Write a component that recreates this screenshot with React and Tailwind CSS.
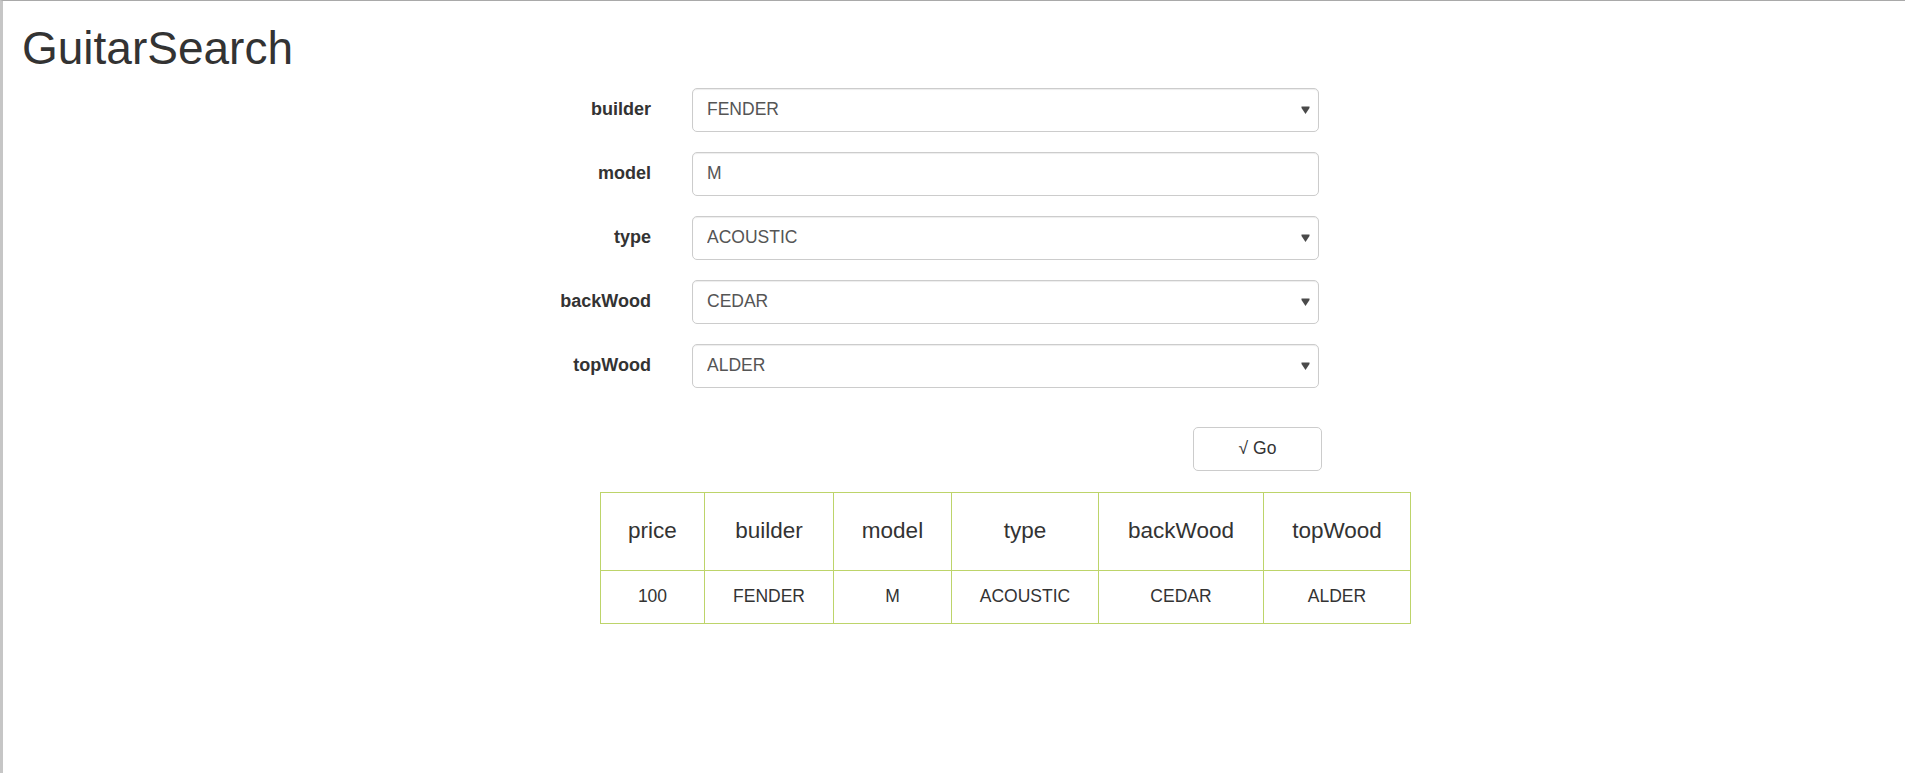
import React, { useState } from 'react';

const font = { fontFamily: '"Liberation Sans", Arial, sans-serif' };

const Arrow = () => (
  <svg width="9" height="9" viewBox="0 0 9 9" className="pointer-events-none absolute right-[9px] top-1/2 -translate-y-1/2">
    <path d="M0.5 1H8.5V2.5L4.5 8.5L0.5 2.5Z" fill="#4a4a4a" />
  </svg>
);

const SelectField = ({ value, options, onChange }) => (
  <div className="relative w-[627px]">
    <select
      value={value}
      onChange={(e) => onChange(e.target.value)}
      className="block h-[44px] w-full appearance-none rounded-[5px] border border-[#cccccc] bg-white pl-[14px] pr-8 text-[17.5px] text-[#555555] shadow-[inset_0_1px_1px_rgba(0,0,0,0.075)] outline-none"
    >
      {options.map((o) => (
        <option key={o} value={o}>{o}</option>
      ))}
    </select>
    <Arrow />
  </div>
);

const App = () => {
  const [builder, setBuilder] = useState('FENDER');
  const [model, setModel] = useState('M');
  const [type, setType] = useState('ACOUSTIC');
  const [backWood, setBackWood] = useState('CEDAR');
  const [topWood, setTopWood] = useState('ALDER');

  const woods = ['ALDER', 'CEDAR', 'MAHOGANY', 'MAPLE', 'ROSEWOOD'];

  const rows = [
    { label: 'builder', field: <SelectField value={builder} onChange={setBuilder} options={['FENDER', 'GIBSON', 'MARTIN', 'TAYLOR']} /> },
    {
      label: 'model',
      field: (
        <input
          value={model}
          onChange={(e) => setModel(e.target.value)}
          className="block h-[44px] w-[627px] rounded-[5px] border border-[#cccccc] bg-white px-[14px] text-[17.5px] text-[#555555] shadow-[inset_0_1px_1px_rgba(0,0,0,0.075)] outline-none"
        />
      ),
    },
    { label: 'type', field: <SelectField value={type} onChange={setType} options={['ACOUSTIC', 'ELECTRIC']} /> },
    { label: 'backWood', field: <SelectField value={backWood} onChange={setBackWood} options={woods} /> },
    { label: 'topWood', field: <SelectField value={topWood} onChange={setTopWood} options={woods} /> },
  ];

  const cols = [
    { name: 'price', w: 'w-[104px]' },
    { name: 'builder', w: 'w-[129px]' },
    { name: 'model', w: 'w-[118px]' },
    { name: 'type', w: 'w-[147px]' },
    { name: 'backWood', w: 'w-[165px]' },
    { name: 'topWood', w: 'w-[147px]' },
  ];
  const result = ['100', builder, model, type, backWood, topWood];

  return (
    <div className="min-h-screen border-t border-l-[3px] border-t-[#a9a9a9] border-l-[#c6c6c6] bg-white text-[#333333]" style={font}>
      <h1 className="ml-[19px] pt-[22px] text-[46px] font-normal leading-[1.1]">GuitarSearch</h1>

      <form className="ml-[448px] mt-[14px] w-[868px]" onSubmit={(e) => e.preventDefault()}>
        <div className="flex flex-col gap-[20px]">
          {rows.map((r) => (
            <div key={r.label} className="flex items-center">
              <label className="w-[200px] text-right text-[18px] font-bold">{r.label}</label>
              <div className="ml-[41px]">{r.field}</div>
            </div>
          ))}
        </div>

        <button
          type="submit"
          className="ml-[742px] mt-[39px] flex h-[44px] w-[129px] items-center justify-center rounded-[5px] border border-[#cccccc] bg-white text-[17.5px] text-[#333333]"
        >
          √ Go
        </button>
      </form>

      <table className="ml-[597px] mt-[21px] table-fixed border-collapse border border-[#bdd46a] text-center">
        <thead>
          <tr className="h-[78px]">
            {cols.map((c) => (
              <th key={c.name} className={`${c.w} border border-[#bdd46a] text-[22.5px] font-normal`}>{c.name}</th>
            ))}
          </tr>
        </thead>
        <tbody>
          <tr className="h-[53px]">
            {result.map((v, i) => (
              <td key={i} className="border border-[#bdd46a] text-[17.5px]">{v}</td>
            ))}
          </tr>
        </tbody>
      </table>
    </div>
  );
};

export default App;
